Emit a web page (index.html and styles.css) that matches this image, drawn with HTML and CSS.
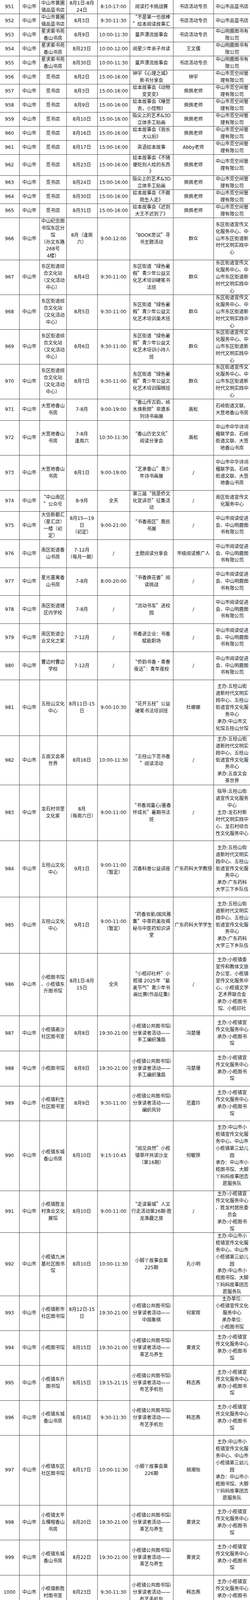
FILE: index.html
```html
<!DOCTYPE html>
<html lang="zh-CN">
<head>
<meta charset="utf-8">
<title>中山市阅读活动安排表</title>
<link rel="stylesheet" href="styles.css">
</head>
<body>
<div class="sheet" role="table">
<div class="row h36" role="row"><div class="c"><span>951</span></div><div class="c"><span>中山市</span></div><div class="c"><span>中山市黄圃<br>镇品蓝书店</span></div><div class="c"><span>8月1日-8月<br>24日</span></div><div class="c"><span>8:10-17:00</span></div><div class="c"><span>阅读打卡挑战赛</span></div><div class="c"><span>书店活动专员</span></div><div class="c"><span>中山市品蓝书店</span></div></div>
<div class="row h36" role="row"><div class="c"><span>952</span></div><div class="c"><span>中山市</span></div><div class="c"><span>中山市黄圃<br>镇品蓝书店</span></div><div class="c"><span>8月3日</span></div><div class="c"><span>9:30-11:30</span></div><div class="c"><span><b class="q">“</b>不是第一也很棒<br><b class="q">”</b>绘本阅读故事汇</span></div><div class="c"><span>书店活动专员</span></div><div class="c"><span>中山市品蓝书店</span></div></div>
<div class="row h36" role="row"><div class="c"><span>953</span></div><div class="c"><span>中山市</span></div><div class="c"><span>星求索书苑<br>香山书房</span></div><div class="c"><span>8月9日</span></div><div class="c"><span>10:00-11:30</span></div><div class="c"><span>童声漂流故事会</span></div><div class="c"><span>书店活动专员</span></div><div class="c"><span>中山明鹿图书有<br>限公司</span></div></div>
<div class="row h36" role="row"><div class="c"><span>954</span></div><div class="c"><span>中山市</span></div><div class="c"><span>星求索书苑<br>香山书房</span></div><div class="c"><span>8月23日</span></div><div class="c"><span>10:00-12:00</span></div><div class="c"><span>阅星少年亲子共读</span></div><div class="c"><span>王文儒</span></div><div class="c"><span>中山明鹿图书有<br>限公司</span></div></div>
<div class="row h36" role="row"><div class="c"><span>955</span></div><div class="c"><span>中山市</span></div><div class="c"><span>星求索书苑<br>香山书房</span></div><div class="c"><span>8月30日</span></div><div class="c"><span>10:00-11:30</span></div><div class="c"><span>童声漂流故事会</span></div><div class="c"><span>书店活动专员</span></div><div class="c"><span>中山明鹿图书有<br>限公司</span></div></div>
<div class="row h36" role="row"><div class="c"><span>956</span></div><div class="c"><span>中山市</span></div><div class="c"><span>觅书店</span></div><div class="c"><span>8月2日</span></div><div class="c"><span>15:00-16:00</span></div><div class="c"><span>钟宇《心理之城》<br>新书分享会</span></div><div class="c"><span>钟宇</span></div><div class="c"><span>中山市觅空间管<br>理有限公司</span></div></div>
<div class="row h36" role="row"><div class="c"><span>957</span></div><div class="c"><span>中山市</span></div><div class="c"><span>觅书店</span></div><div class="c"><span>8月3日</span></div><div class="c"><span>15:00-16:00</span></div><div class="c"><span>绘本故事会《动物<br>变变变》</span></div><div class="c"><span>佩佩老师</span></div><div class="c"><span>中山市觅空间管<br>理有限公司</span></div></div>
<div class="row h36" role="row"><div class="c"><span>958</span></div><div class="c"><span>中山市</span></div><div class="c"><span>觅书店</span></div><div class="c"><span>8月9日</span></div><div class="c"><span>15:00-16:00</span></div><div class="c"><span>绘本故事会《睡觉<br>去，小怪物》</span></div><div class="c"><span>佩佩老师</span></div><div class="c"><span>中山市觅空间管<br>理有限公司</span></div></div>
<div class="row h36" role="row"><div class="c"><span>959</span></div><div class="c"><span>中山市</span></div><div class="c"><span>觅书店</span></div><div class="c"><span>8月10日</span></div><div class="c"><span>15:00-16:00</span></div><div class="c"><span>指尖上的艺术&amp;3D<br>立体手工贴画</span></div><div class="c"><span>佩佩老师</span></div><div class="c"><span>中山市觅空间管<br>理有限公司</span></div></div>
<div class="row h36" role="row"><div class="c"><span>960</span></div><div class="c"><span>中山市</span></div><div class="c"><span>觅书店</span></div><div class="c"><span>8月16日</span></div><div class="c"><span>15:00-16:00</span></div><div class="c"><span>绘本故事会《我长<br>大以后》</span></div><div class="c"><span>佩佩老师</span></div><div class="c"><span>中山市觅空间管<br>理有限公司</span></div></div>
<div class="row h36" role="row"><div class="c"><span>961</span></div><div class="c"><span>中山市</span></div><div class="c"><span>觅书店</span></div><div class="c"><span>8月17日</span></div><div class="c"><span>15:00-16:00</span></div><div class="c"><span>英语绘本故事</span></div><div class="c"><span>Abby老师</span></div><div class="c"><span>中山市觅空间管<br>理有限公司</span></div></div>
<div class="row h54" role="row"><div class="c"><span>962</span></div><div class="c"><span>中山市</span></div><div class="c"><span>觅书店</span></div><div class="c"><span>8月23日</span></div><div class="c"><span>15:00-16:00</span></div><div class="c"><span>绘本故事会《不随<br>便吃别人给的东西<br>》</span></div><div class="c"><span>佩佩老师</span></div><div class="c"><span>中山市觅空间管<br>理有限公司</span></div></div>
<div class="row h36" role="row"><div class="c"><span>963</span></div><div class="c"><span>中山市</span></div><div class="c"><span>觅书店</span></div><div class="c"><span>8月24日</span></div><div class="c"><span>15:00-16:00</span></div><div class="c"><span>指尖上的艺术&amp;3D<br>立体手工贴画</span></div><div class="c"><span>佩佩老师</span></div><div class="c"><span>中山市觅空间管<br>理有限公司</span></div></div>
<div class="row h36" role="row"><div class="c"><span>964</span></div><div class="c"><span>中山市</span></div><div class="c"><span>觅书店</span></div><div class="c"><span>8月30日</span></div><div class="c"><span>15:00-16:00</span></div><div class="c"><span>绘本故事会《不跟<br>陌生人走》</span></div><div class="c"><span>佩佩老师</span></div><div class="c"><span>中山市觅空间管<br>理有限公司</span></div></div>
<div class="row h36" role="row"><div class="c"><span>965</span></div><div class="c"><span>中山市</span></div><div class="c"><span>觅书店</span></div><div class="c"><span>8月31日</span></div><div class="c"><span>15:00-16:00</span></div><div class="c"><span>绘本故事会《迟到<br>大王不迟到了》</span></div><div class="c"><span>佩佩老师</span></div><div class="c"><span>中山市觅空间管<br>理有限公司</span></div></div>
<div class="row h108" role="row"><div class="c"><span>966</span></div><div class="c"><span>中山市</span></div><div class="c"><span>中山纪念图<br>书馆东区分<br>馆<br>（孙文东路<br>268号<br>4楼）</span></div><div class="c"><span>8月（逢周<br>六）</span></div><div class="c"><span>9:00-12:00</span></div><div class="c"><span><b class="q">“</b>BOOK思议<b class="q">”</b>寻<br>书主题活动</span></div><div class="c"><span>群众</span></div><div class="c"><span>东区街道宣传文<br>化服务中心、中<br>山市东区街道新<br>时代文明实践中<br>心</span></div></div>
<div class="row h89" role="row"><div class="c"><span>967</span></div><div class="c"><span>中山市</span></div><div class="c"><span>东区街道综<br>合文化站<br>（文化活动<br>中心）</span></div><div class="c"><span>8月4日</span></div><div class="c"><span>9:30-11:00</span></div><div class="c"><span>东区街道<b class="q">“</b>绿色暑<br>假<b class="q">”</b>青少年公益文<br>化艺术培训硬笔书<br>法班</span></div><div class="c"><span>群众</span></div><div class="c"><span>东区街道宣传文<br>化服务中心、中<br>山市东区街道新<br>时代文明实践中<br>心</span></div></div>
<div class="row h89" role="row"><div class="c"><span>968</span></div><div class="c"><span>中山市</span></div><div class="c"><span>东区街道综<br>合文化站<br>（文化活动<br>中心）</span></div><div class="c"><span>8月5日</span></div><div class="c"><span>9:30-11:00</span></div><div class="c"><span>东区街道<b class="q">“</b>绿色暑<br>假<b class="q">”</b>青少年公益文<br>化艺术培训美术班</span></div><div class="c"><span>群众</span></div><div class="c"><span>东区街道宣传文<br>化服务中心、中<br>山市东区街道新<br>时代文明实践中<br>心</span></div></div>
<div class="row h89" role="row"><div class="c"><span>969</span></div><div class="c"><span>中山市</span></div><div class="c"><span>东区街道综<br>合文化站<br>（文化活动<br>中心）</span></div><div class="c"><span>8月6日</span></div><div class="c"><span>9:30-11:00</span></div><div class="c"><span>东区街道<b class="q">“</b>绿色暑<br>假<b class="q">”</b>青少年公益文<br>化艺术培训小持人<br>班</span></div><div class="c"><span>群众</span></div><div class="c"><span>东区街道宣传文<br>化服务中心、中<br>山市东区街道新<br>时代文明实践中<br>心</span></div></div>
<div class="row h89" role="row"><div class="c"><span>970</span></div><div class="c"><span>中山市</span></div><div class="c"><span>东区街道综<br>合文化站<br>（文化活动<br>中心）</span></div><div class="c"><span>8月7日</span></div><div class="c"><span>9:30-11:00</span></div><div class="c"><span>东区街道<b class="q">“</b>绿色暑<br>假<b class="q">”</b>青少年公益文<br>化艺术培训围棋班</span></div><div class="c"><span>群众</span></div><div class="c"><span>东区街道宣传文<br>化服务中心、中<br>山市东区街道新<br>时代文明实践中<br>心</span></div></div>
<div class="row h55" role="row"><div class="c"><span>971</span></div><div class="c"><span>中山市</span></div><div class="c"><span>大笪地香山<br>书房</span></div><div class="c"><span>7-8月</span></div><div class="c"><span>9:00-19:00</span></div><div class="c"><span><b class="q">“</b>香山传古韵，岐<br>水焕新颜<b class="q">”</b>非遗系<br>列诗书画展</span></div><div class="c"><span>高松</span></div><div class="c"><span>石岐街道文联、<br>大笪地香山书房</span></div></div>
<div class="row h89" role="row"><div class="c"><span>972</span></div><div class="c"><span>中山市</span></div><div class="c"><span>大笪地香山<br>书房</span></div><div class="c"><span>7-8月<br>逢周六</span></div><div class="c"><span>10:30-11:30</span></div><div class="c"><span><b class="q">“</b>香山历史文化<b class="q">”</b><br>阅读分享会</span></div><div class="c"><span>高松</span></div><div class="c"><span>中山市中华诗词<br>楹联学会、石岐<br>街道文联、大笪<br>地香山书房</span></div></div>
<div class="row h90" role="row"><div class="c"><span>973</span></div><div class="c"><span>中山市</span></div><div class="c"><span>大笪地香山<br>书房</span></div><div class="c"><span>8月1日</span></div><div class="c"><span>9:00-19:00</span></div><div class="c"><span><b class="q">“</b>艺承香山<b class="q">”</b>青少<br>年诗书画展</span></div><div class="c"><span>/</span></div><div class="c"><span>中山市中华诗词<br>楹联学会、石岐<br>街道文联、大笪<br>地香山书房</span></div></div>
<div class="row h54" role="row"><div class="c"><span>974</span></div><div class="c"><span>中山市</span></div><div class="c"><span><b class="q">“</b>中山南区<br><b class="q">”</b>公众号</span></div><div class="c"><span>8-9月</span></div><div class="c"><span>全天</span></div><div class="c"><span>第三届<b class="q">“</b>我是侨文<br>化宣讲员<b class="q">”</b>征集活<br>动</span></div><div class="c"><span>/</span></div><div class="c"><span>南区街道宣传文<br>化服务中心</span></div></div>
<div class="row h72" role="row"><div class="c"><span>975</span></div><div class="c"><span>中山市</span></div><div class="c"><span>大信新都汇<br>（星汇店）<br>一楼（初<br>定）</span></div><div class="c"><span>8月15—19<br>日<br>（初定）</span></div><div class="c"><span>9:00-21:00</span></div><div class="c"><span><b class="q">“</b>书香南区<b class="q">”</b>惠民<br>书展</span></div><div class="c"><span>/</span></div><div class="c"><span>中山市阅读促进<br>会、中山明鹿图<br>书有限公司</span></div></div>
<div class="row h72" role="row"><div class="c"><span>976</span></div><div class="c"><span>中山市</span></div><div class="c"><span>南区街道香<br>山书房</span></div><div class="c"><span>7-12月<br>（每月一期）</span></div><div class="c"><span>/</span></div><div class="c"><span>主题阅读分享会</span></div><div class="c"><span>市级阅读推广人</span></div><div class="c"><span>中山市阅读促进<br>会、中山明鹿图<br>书有限公司</span></div></div>
<div class="row h71" role="row"><div class="c"><span>977</span></div><div class="c"><span>中山市</span></div><div class="c"><span>星光喜寓香<br>山书房</span></div><div class="c"><span>7-8月</span></div><div class="c"><span>8:00-20:00</span></div><div class="c"><span><b class="q">“</b>书香换花香<b class="q">”</b>阅<br>读挑战</span></div><div class="c"><span>/</span></div><div class="c"><span>中山市阅读促进<br>会、中山明鹿图<br>书有限公司</span></div></div>
<div class="row h72" role="row"><div class="c"><span>978</span></div><div class="c"><span>中山市</span></div><div class="c"><span>南区街道辖<br>区内学校</span></div><div class="c"><span>7-8月</span></div><div class="c"><span>/</span></div><div class="c"><span><b class="q">“</b>流动书车<b class="q">”</b>进校<br>园</span></div><div class="c"><span>/</span></div><div class="c"><span>中山市阅读促进<br>会、中山明鹿图<br>书有限公司</span></div></div>
<div class="row h72" role="row"><div class="c"><span>979</span></div><div class="c"><span>中山市</span></div><div class="c"><span>南区街道企<br>业文化之家</span></div><div class="c"><span>7-12月</span></div><div class="c"><span>/</span></div><div class="c"><span>书香进企业：书香<br>赋能职场</span></div><div class="c"><span>/</span></div><div class="c"><span>中山市阅读促进<br>会、中山明鹿图<br>书有限公司</span></div></div>
<div class="row h72" role="row"><div class="c"><span>980</span></div><div class="c"><span>中山市</span></div><div class="c"><span>曹边村曹边<br>学校</span></div><div class="c"><span>7-12月</span></div><div class="c"><span>/</span></div><div class="c"><span><b class="q">“</b>侨韵书香<b class="q">·</b>青春<br>夜话<b class="q">”</b>：青年夜校</span></div><div class="c"><span>/</span></div><div class="c"><span>中山市阅读促进<br>会、中山明鹿图<br>书有限公司</span></div></div>
<div class="row h143" role="row"><div class="c"><span>981</span></div><div class="c"><span>中山市</span></div><div class="c"><span>五桂山文化<br>中心</span></div><div class="c"><span>8月11日-15<br>日</span></div><div class="c"><span>9:00-10:30</span></div><div class="c"><span><b class="q">“</b>花开五桂<b class="q">”</b>公益<br>硬笔书法培训班</span></div><div class="c"><span>杜娜娜</span></div><div class="c"><span>主办:五桂山街<br>道新时代文明实<br>践中心、五桂山<br>街道宣传文化服<br>务中心<br>承办:中山市文<br>化馆五桂山分馆</span></div></div>
<div class="row h126" role="row"><div class="c"><span>982</span></div><div class="c"><span>中山市</span></div><div class="c"><span>五亩文会茶<br>世界</span></div><div class="c"><span>8月16日</span></div><div class="c"><span>10:00-11:30</span></div><div class="c"><span><b class="q">“</b>五桂山下觅书香<br><b class="q">”</b>阅读活动</span></div><div class="c"><span>/</span></div><div class="c"><span>主办:五桂山街<br>道新时代文明实<br>践中心、五桂山<br>街道宣传文化服<br>务中心<br>承办:五亩文会<br>茶世界</span></div></div>
<div class="row h143" role="row"><div class="c"><span>983</span></div><div class="c"><span>中山市</span></div><div class="c"><span>龙石村邻里<br>文化家</span></div><div class="c"><span>8月<br>（每周六日）</span></div><div class="c"><span>9:00-11:00</span></div><div class="c"><span><b class="q">“</b>书香润童心/墨香<br>伴成长<b class="q">”</b>暑期书法<br>班</span></div><div class="c"><span>/</span></div><div class="c"><span>指导:五桂山街<br>道宣传文化服务<br>中心<br>主办:龙石村新<br>时代文明实践中<br>心、龙石村综合<br>性文化服务中心</span></div></div>
<div class="row h144" role="row"><div class="c"><span>984</span></div><div class="c"><span>中山市</span></div><div class="c"><span>五桂山文化<br>中心</span></div><div class="c"><span>9月1日</span></div><div class="c"><span>9:00-11:00<br>（暂定）</span></div><div class="c"><span>沉香科普公益讲座</span></div><div class="c"><span>广东药科大学教授</span></div><div class="c"><span>主办:五桂山街<br>道新时代文明实<br>践中心、五桂山<br>街道宣传文化服<br>务中心<br>承办:广东药科<br>大学三下乡队伍</span></div></div>
<div class="row h144" role="row"><div class="c"><span>985</span></div><div class="c"><span>中山市</span></div><div class="c"><span>五桂山文化<br>中心</span></div><div class="c"><span>9月1日</span></div><div class="c"><span>9:00-11:00<br>（暂定）</span></div><div class="c"><span><b class="q">“</b>药香妆影/国风雅<br>集<b class="q">”</b>中草药美妆揭<br>秘与中医药知识讲<br>堂</span></div><div class="c"><span>广东药科大学学生</span></div><div class="c"><span>主办:五桂山街<br>道新时代文明实<br>践中心、五桂山<br>街道宣传文化服<br>务中心<br>承办:广东药科<br>大学三下乡队伍</span></div></div>
<div class="row h160" role="row"><div class="c"><span>986</span></div><div class="c"><span>中山市</span></div><div class="c"><span>小榄图书馆<br>、小榄镇东<br>升图书馆</span></div><div class="c"><span>8月1日-8月<br>15日</span></div><div class="c"><span>全天</span></div><div class="c"><span><b class="q">“</b>小榄印社杯<b class="q">”</b>小<br>榄镇 2025年<b class="q">“</b>最<br>美节气<b class="q">”</b>青少年书<br>画比赛(作品征集)</span></div><div class="c"><span>/</span></div><div class="c"><span>主办:小榄镇委<br>宣传和教体文旅<br>办公室、小榄镇<br>宣传文化服务中<br>心、小榄镇文学<br>艺术界联合会<br>承办:小榄图书<br>馆、小榄印社</span></div></div>
<div class="row h90" role="row"><div class="c"><span>987</span></div><div class="c"><span>中山市</span></div><div class="c"><span>小榄镇高沙<br>社区图书室</span></div><div class="c"><span>8月8日</span></div><div class="c"><span>19:30-21:00</span></div><div class="c"><span>小榄镇公共图书馆i<br>分享读者活动——<br>手工编织蒲扇</span></div><div class="c"><span>冯楚珊</span></div><div class="c"><span>主办:小榄镇宣<br>传文化服务中心<br>承办:小榄图书<br>馆</span></div></div>
<div class="row h90" role="row"><div class="c"><span>988</span></div><div class="c"><span>中山市</span></div><div class="c"><span>小榄图书馆</span></div><div class="c"><span>8月9日</span></div><div class="c"><span>19:30-21:00</span></div><div class="c"><span>小榄镇公共图书馆i<br>分享读者活动——<br>手工编织蒲扇</span></div><div class="c"><span>冯楚珊</span></div><div class="c"><span>主办:小榄镇宣<br>传文化服务中心<br>承办:小榄图书<br>馆</span></div></div>
<div class="row h89" role="row"><div class="c"><span>989</span></div><div class="c"><span>中山市</span></div><div class="c"><span>小榄镇利生<br>社区图书室</span></div><div class="c"><span>8月9日</span></div><div class="c"><span>9:30-11:00</span></div><div class="c"><span>小榄镇公共图书馆i<br>分享读者活动——<br>编织风铃</span></div><div class="c"><span>范嘉玲</span></div><div class="c"><span>主办:小榄镇宣<br>传文化服务中心<br>承办:小榄图书<br>馆</span></div></div>
<div class="row h179" role="row"><div class="c"><span>990</span></div><div class="c"><span>中山市</span></div><div class="c"><span>小榄镇东城<br>香山书房</span></div><div class="c"><span>8月10日</span></div><div class="c"><span>9:15-10:45</span></div><div class="c"><span><b class="q">“</b>阅见自然<b class="q">”</b>小榄<br>镇草坪共读沙龙<br>（第16期）</span></div><div class="c"><span>何敏铧</span></div><div class="c"><span>主办:中山市小<br>榄镇宣传文化服<br>务中心、中山市<br>小榄镇第三幼儿<br>园<br>承办：中山市小<br>榄图书馆、大脚<br>丫妈妈故事团志<br>愿服务队</span></div></div>
<div class="row h107" role="row"><div class="c"><span>991</span></div><div class="c"><span>中山市</span></div><div class="c"><span>小榄镇胜龙<br>村渔业文化<br>展馆</span></div><div class="c"><span>8月10日</span></div><div class="c"><span>9:00-11:00</span></div><div class="c"><span><b class="q">“</b>走读菊城<b class="q">”</b>人文<br>行走活动第26期·胜<br>龙渔趣之旅</span></div><div class="c"><span>/</span></div><div class="c"><span>主办:小榄镇宣<br>传文化服务中心<br>、胜龙村居民委<br>员会<br>承办:小榄图书<br>馆</span></div></div>
<div class="row h162" role="row"><div class="c"><span>992</span></div><div class="c"><span>中山市</span></div><div class="c"><span>小榄镇九洲<br>基社区图书<br>馆</span></div><div class="c"><span>8月10日</span></div><div class="c"><span>10:00-11:30</span></div><div class="c"><span>小脚丫故事会第<br>225期</span></div><div class="c"><span>孔小明</span></div><div class="c"><span>主办:中山市小<br>榄镇宣传文化服<br>务中心、中山市<br>小榄镇第三幼儿<br>园<br>承办:中山市小<br>榄图书馆、大脚<br>丫妈妈故事团志<br>愿服务队</span></div></div>
<div class="row h89" role="row"><div class="c"><span>993</span></div><div class="c"><span>中山市</span></div><div class="c"><span>小榄镇新市<br>社区图书馆</span></div><div class="c"><span>8月12日-15<br>日</span></div><div class="c"><span>19:30-21:00</span></div><div class="c"><span>小榄镇公共图书馆i<br>分享读者活动——<br>中国象棋</span></div><div class="c"><span>何家辉</span></div><div class="c"><span>主办单位:<br>小榄镇宣传文化<br>服务中心<br>承办单位:<br>小榄图书馆</span></div></div>
<div class="row h89" role="row"><div class="c"><span>994</span></div><div class="c"><span>中山市</span></div><div class="c"><span>小榄图书馆</span></div><div class="c"><span>8月15日</span></div><div class="c"><span>19:30-21:00</span></div><div class="c"><span>小榄镇公共图书馆i<br>分享读者活动——<br>茶艺与养生</span></div><div class="c"><span>黄贤文</span></div><div class="c"><span>主办:小榄镇宣<br>传文化服务中心<br>承办:小榄图书<br>馆</span></div></div>
<div class="row h90" role="row"><div class="c"><span>995</span></div><div class="c"><span>中山市</span></div><div class="c"><span>小榄镇东升<br>图书馆</span></div><div class="c"><span>8月15日</span></div><div class="c"><span>19:15-21:15</span></div><div class="c"><span>小榄镇公共图书馆i<br>分享读者活动——<br>布艺手机包</span></div><div class="c"><span>韩志燕</span></div><div class="c"><span>主办:小榄镇宣<br>传文化服务中心<br>承办:小榄图书<br>馆</span></div></div>
<div class="row h89" role="row"><div class="c"><span>996</span></div><div class="c"><span>中山市</span></div><div class="c"><span>小榄镇东城<br>香山书房</span></div><div class="c"><span>8月16日</span></div><div class="c"><span>9:30-11:30</span></div><div class="c"><span>小榄镇公共图书馆i<br>分享读者活动——<br>布艺手机包</span></div><div class="c"><span>韩志燕</span></div><div class="c"><span>主办:小榄镇宣<br>传文化服务中心<br>承办:小榄图书<br>馆</span></div></div>
<div class="row h179" role="row"><div class="c"><span>997</span></div><div class="c"><span>中山市</span></div><div class="c"><span>小榄镇东区<br>社区图书馆</span></div><div class="c"><span>8月17日</span></div><div class="c"><span>10:00-11:30</span></div><div class="c"><span>小脚丫故事会第<br>226期</span></div><div class="c"><span>胡湘怡</span></div><div class="c"><span>主办:中山市小<br>榄镇宣传文化服<br>务中心、中山市<br>小榄镇第三幼儿<br>园<br>承办：中山市小<br>榄图书馆、大脚<br>丫妈妈故事团志<br>愿服务队</span></div></div>
<div class="row h89" role="row"><div class="c"><span>998</span></div><div class="c"><span>中山市</span></div><div class="c"><span>小榄镇太平<br>五棵榕香山<br>书房</span></div><div class="c"><span>8月20日</span></div><div class="c"><span>19:30-21:00</span></div><div class="c"><span>小榄镇公共图书馆i<br>分享读者活动——<br>茶艺与养生</span></div><div class="c"><span>黄贤文</span></div><div class="c"><span>主办:小榄镇宣<br>传文化服务中心<br>承办:小榄图书<br>馆</span></div></div>
<div class="row h90" role="row"><div class="c"><span>999</span></div><div class="c"><span>中山市</span></div><div class="c"><span>小榄镇东城<br>香山书房</span></div><div class="c"><span>8月22日</span></div><div class="c"><span>19:30-21:00</span></div><div class="c"><span>小榄镇公共图书馆i<br>分享读者活动——<br>茶艺与养生</span></div><div class="c"><span>黄贤文</span></div><div class="c"><span>主办:小榄镇宣<br>传文化服务中心<br>承办:小榄图书<br>馆</span></div></div>
<div class="row h89" role="row"><div class="c"><span>1000</span></div><div class="c"><span>中山市</span></div><div class="c"><span>小榄镇新胜<br>村图书室</span></div><div class="c"><span>8月23日</span></div><div class="c"><span>9:30-11:30</span></div><div class="c"><span>小榄镇公共图书馆i<br>分享读者活动——<br>布艺手机包</span></div><div class="c"><span>韩志燕</span></div><div class="c"><span>主办:小榄镇宣<br>传文化服务中心<br>承办:小榄图书<br>馆</span></div></div>
</div>
</body>
</html>
```

FILE: styles.css
```css
html, body {
  margin: 0;
  padding: 0;
  background: #ffffff;
}

body {
  font-family: "DejaVu Sans", "Noto Sans CJK SC", sans-serif;
  font-size: 12px;
  line-height: 17.9px;
  color: #111111;
}

.sheet {
  width: 640px;
}

.row {
  display: grid;
  grid-template-columns: 48.5px 52px 69px 79px 83px 111.5px 103px 94px;
  grid-template-rows: minmax(0, 1fr);
  box-sizing: border-box;
  border-bottom: 1px solid #404040;
}

.c {
  display: flex;
  align-items: center;
  justify-content: center;
  min-height: 0;
  border-left: 1px solid #404040;
}

.c > span {
  display: block;
  text-align: center;
  white-space: nowrap;
}

.c:first-child {
  border-left: none;
}

.c:last-child {
  border-left: 2px solid #9c9c9c;
}

.q {
  font-family: "Noto Sans CJK SC", sans-serif;
  font-weight: normal;
  line-height: 1;
}

.h36 { height: 36px; }
.h54 { height: 54px; }
.h55 { height: 55px; }
.h71 { height: 71px; }
.h72 { height: 72px; }
.h89 { height: 89px; }
.h90 { height: 90px; }
.h107 { height: 107px; }
.h108 { height: 108px; }
.h126 { height: 126px; }
.h143 { height: 143px; }
.h144 { height: 144px; }
.h160 { height: 160px; }
.h162 { height: 162px; }
.h179 { height: 179px; }
```
